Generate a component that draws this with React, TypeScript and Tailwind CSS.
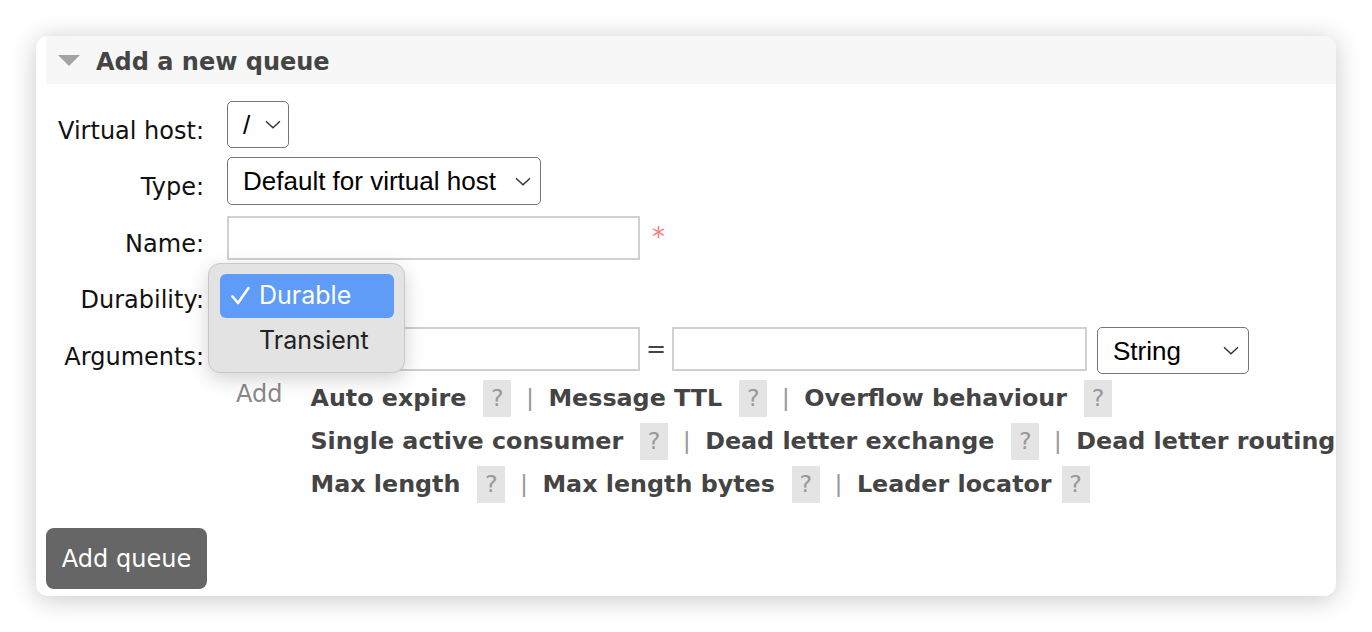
import React from 'react';

const sans = { fontFamily: '"DejaVu Sans", Verdana, sans-serif' };
const arial = { fontFamily: '"Liberation Sans", Arial, sans-serif' };
const sys = { fontFamily: 'Inter, "Liberation Sans", sans-serif' };

function Chevron() {
  return (
    <svg width="16" height="9" viewBox="0 0 16 9" className="shrink-0">
      <path d="M1 1.2 L8 7.8 L15 1.2" fill="none" stroke="#333" strokeWidth="1.4" />
    </svg>
  );
}

function FakeSelect({ value, width, height }: { value: string; width?: string; height: string }) {
  return (
    <div
      className={`flex items-center justify-between gap-[15px] border-[1.5px] border-[#767676] rounded-[5px] bg-white pl-[15px] pr-[9px] text-[26px] text-black ${width ?? ''} ${height}`}
      style={arial}
    >
      <span className="leading-none">{value}</span>
      <Chevron />
    </div>
  );
}

function Label({ text, pt }: { text: string; pt: string }) {
  return (
    <div className={`w-[158px] shrink-0 text-right text-[24px] leading-[30px] text-[#111] ${pt}`}>{text}</div>
  );
}

function Help({ ml = 'ml-[17px]' }: { ml?: string }) {
  return (
    <span className={`${ml} inline-flex w-[28px] h-[37px] items-center justify-center bg-[#e4e4e4] text-[#999] font-normal`}>
      ?
    </span>
  );
}

function Sep() {
  return <span className="w-[37px] text-center text-[#999] font-normal">|</span>;
}

const lines: { text: string; ml?: string }[][] = [
  [{ text: 'Auto expire' }, { text: 'Message TTL' }, { text: 'Overflow behaviour' }],
  [{ text: 'Single active consumer' }, { text: 'Dead letter exchange' }, { text: 'Dead letter routing' }],
  [{ text: 'Max length' }, { text: 'Max length bytes' }, { text: 'Leader locator', ml: 'ml-[10px]' }],
];

export default function App() {
  return (
    <div className="w-[1372px] h-[632px] bg-white pt-[36px] pl-[36px] overflow-hidden" style={sans}>
      <div className="relative w-[1300px] h-[560px] rounded-[12px] bg-white pl-[10px] overflow-hidden shadow-[0_3px_26px_rgba(0,0,0,0.22)]">
        {/* Header */}
        <div className="h-[48px] bg-[#f7f7f7] flex items-center pl-[12px]">
          <svg width="22" height="11" viewBox="0 0 22 11">
            <path d="M0 0 H22 L11 11 Z" fill="#a3a3a3" />
          </svg>
          <h2 className="ml-[16px] mt-[3px] text-[24px] font-bold text-[#444] leading-none">Add a new queue</h2>
        </div>

        {/* Form */}
        <div className="pt-[17px]">
          <div className="flex h-[47px] gap-[23px]">
            <Label text="Virtual host:" pt="pt-[15px]" />
            <FakeSelect value="/" width="w-[62px]" height="h-[47px]" />
          </div>
          <div className="flex h-[48px] gap-[23px] mt-[9px]">
            <Label text="Type:" pt="pt-[15px]" />
            <FakeSelect value="Default for virtual host" width="w-[314px]" height="h-[48px]" />
          </div>
          <div className="flex h-[44px] gap-[23px] mt-[11px]">
            <Label text="Name:" pt="pt-[13px]" />
            <div className="flex items-start">
              <input className="w-[413px] h-[44px] border-2 border-[#d0d0d0] outline-none" />
              <span className="ml-[12px] mt-[8px] text-[26px] leading-none text-[#f08080]">*</span>
            </div>
          </div>
          <div className="flex h-[44px] gap-[23px] mt-[12px]">
            <Label text="Durability:" pt="pt-[13px]" />
            <FakeSelect value="" width="w-[160px]" height="h-[44px]" />
          </div>
          <div className="flex h-[47px] gap-[23px] mt-[11px]">
            <Label text="Arguments:" pt="pt-[15px]" />
            <div className="flex items-start">
              <input className="w-[413px] h-[44px] border-2 border-[#d0d0d0] outline-none" />
              <span className="w-[32px] text-center text-[24px] leading-[44px] text-[#444]">=</span>
              <input className="w-[415px] h-[44px] border-2 border-[#d0d0d0] outline-none" />
              <div className="ml-[10px]">
                <FakeSelect value="String" width="w-[152px]" height="h-[47px]" />
              </div>
            </div>
          </div>

          {/* Argument shortcuts */}
          <div className="flex mt-[3px] pl-[190px]">
            <span className="text-[24px] leading-[35px] text-[#888]">Add</span>
            <div className="ml-[28px] text-[23.8px] font-bold text-[#444]">
              {lines.map((line, i) => (
                <div key={i} className="flex items-center h-[43px] whitespace-nowrap">
                  {line.map((item, j) => (
                    <React.Fragment key={j}>
                      {j > 0 && <Sep />}
                      <span>{item.text}</span>
                      {!(i === 1 && j === 2) && <Help ml={item.ml} />}
                    </React.Fragment>
                  ))}
                </div>
              ))}
            </div>
          </div>

          <button className="mt-[22px] w-[161px] h-[61px] rounded-[8px] bg-[#666] text-white text-[24px]">
            Add queue
          </button>
        </div>

        {/* Open durability dropdown */}
        <div
          className="absolute left-[172px] top-[227px] w-[197px] h-[110px] rounded-[12px] bg-[#e3e3e3] border border-[#c8c8c8] shadow-[0_6px_20px_rgba(0,0,0,0.18)] pt-[10px] pl-[11px] pr-[10px]"
          style={sys}
        >
          <div className="h-[44px] rounded-[6px] bg-[#5e9cf7] flex items-center pl-[11px] text-white text-[25px]">
            <svg width="28" height="20" viewBox="0 0 28 20" className="shrink-0">
              <path d="M1.5 10.5 L7 17 L17.5 2" fill="none" stroke="#fff" strokeWidth="2.6" strokeLinecap="round" strokeLinejoin="round" />
            </svg>
            <span>Durable</span>
          </div>
          <div className="h-[46px] flex items-center pl-[39px] text-[25px] text-[#222]">Transient</div>
        </div>
      </div>
    </div>
  );
}
